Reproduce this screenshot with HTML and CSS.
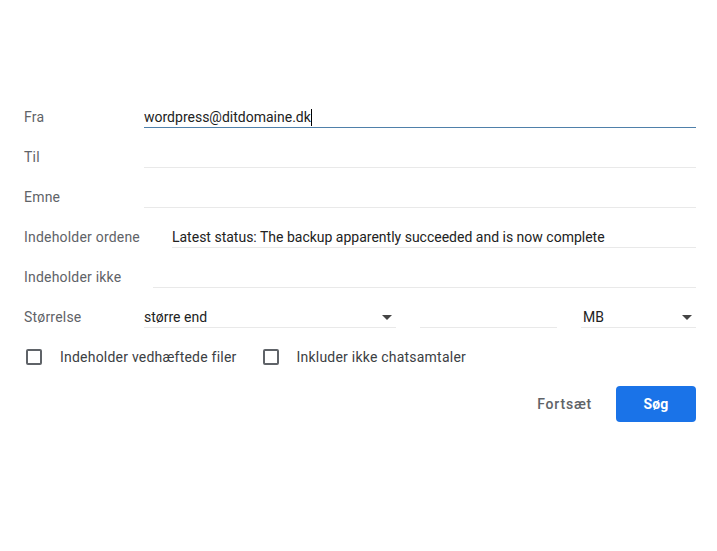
FILE: index.html
```html
<!DOCTYPE html>
<html lang="da">
<head>
    <meta charset="UTF-8">
    <meta name="viewport" content="width=device-width, initial-scale=1.0">
    <title>Søgeindstillinger</title>
    <link rel="stylesheet" href="styles.css">
</head>
<body>
    <div class="search-options">
        <div class="row">
            <div class="label">Fra</div>
            <div class="field focused">wordpress@ditdomaine.dk<span class="caret"></span></div>
        </div>
        <div class="row">
            <div class="label">Til</div>
            <div class="field"></div>
        </div>
        <div class="row">
            <div class="label">Emne</div>
            <div class="field"></div>
        </div>
        <div class="row">
            <div class="label">Indeholder ordene</div>
            <div class="field">Latest status: The backup apparently succeeded and is now complete</div>
        </div>
        <div class="row">
            <div class="label">Indeholder ikke</div>
            <div class="field"></div>
        </div>
        <div class="row">
            <div class="label">Størrelse</div>
            <div class="size-group">
                <div class="field select size-op">større end<span class="arrow"></span></div>
                <div class="field size-num"></div>
                <div class="field select size-unit">MB<span class="arrow"></span></div>
            </div>
        </div>

        <div class="check-row">
            <label class="check-item"><span class="checkbox"></span>Indeholder vedhæftede filer</label>
            <label class="check-item"><span class="checkbox"></span>Inkluder ikke chatsamtaler</label>
        </div>

        <div class="actions">
            <button type="button" class="btn-text">Fortsæt</button>
            <button type="button" class="btn-primary">Søg</button>
        </div>
    </div>
</body>
</html>
```

FILE: styles.css
```css
body {
    margin: 0;
    padding: 0;
    background: #fff;
    font-family: Roboto, Arial, sans-serif;
    font-size: 14px;
    color: #222;
}
.search-options {
    padding: 97px 21px 0 24px;
}
.row {
    display: flex;
    gap: 32px;
    margin-bottom: 9px;
}
.label {
    min-width: 88px;
    padding-top: 10px;
    line-height: 20px;
    color: #5f6368;
    letter-spacing: 0.2px;
    white-space: nowrap;
}
.field {
    flex: 1;
    padding-top: 10px;
    height: 20px;
    line-height: 20px;
    border-bottom: 1px solid #e9e9e9;
    color: #222;
    white-space: nowrap;
}
.field.focused {
    border-bottom-color: #4f80aa;
}
.caret {
    display: inline-block;
    width: 1px;
    height: 17px;
    background: #000;
    vertical-align: -4px;
}
.size-group {
    flex: 1;
    display: flex;
    gap: 24px;
}
.size-op {
    flex: 0 0 252px;
}
.size-num {
    flex: 0 0 137px;
}
.size-unit {
    padding-left: 2px;
}
.select {
    display: flex;
    justify-content: space-between;
    align-items: center;
    padding-top: 10px;
}
.arrow {
    width: 0;
    height: 0;
    margin-right: 4px;
    border-left: 5px solid transparent;
    border-right: 5px solid transparent;
    border-top: 5px solid #444;
}
.check-row {
    display: flex;
    align-items: center;
    height: 40px;
    gap: 24px;
}
.check-item {
    display: flex;
    align-items: center;
    color: #3c4043;
    letter-spacing: 0.22px;
}
.checkbox {
    width: 12px;
    height: 12px;
    margin: 0 18px 0 2px;
    border: 2px solid #5f6368;
    border-radius: 2px;
}
.actions {
    display: flex;
    justify-content: flex-end;
    margin-top: 9px;
}
button {
    font-family: Roboto, Arial, sans-serif;
    font-size: 14px;
    font-weight: 500;
    height: 36px;
    border: none;
    border-radius: 4px;
    cursor: pointer;
    letter-spacing: 0.2px;
}
.btn-text {
    background: none;
    color: #5f6368;
    padding: 0 24px;
    letter-spacing: 0.8px;
}
.btn-primary {
    background: #1a73e8;
    color: #fff;
    width: 80px;
    font-weight: 700;
}
```
